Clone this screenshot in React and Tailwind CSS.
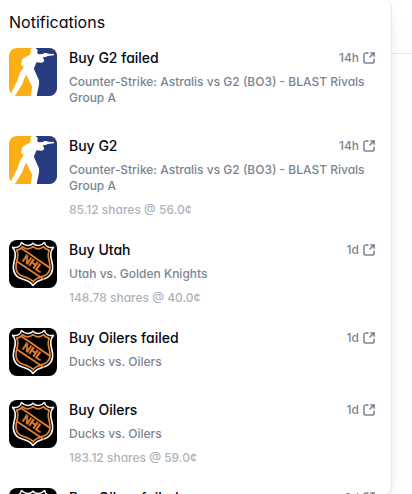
import React from 'react'

const notifications = [
  { id: 1, title: 'Buy G2 failed', market: 'Counter-Strike: Astralis vs G2 (BO3) - BLAST Rivals Group A', time: '14h', logo: CounterStrikeLogo },
  { id: 2, title: 'Buy G2', market: 'Counter-Strike: Astralis vs G2 (BO3) - BLAST Rivals Group A', shares: '85.12 shares @ 56.0¢', time: '14h', logo: CounterStrikeLogo },
  { id: 3, title: 'Buy Utah', market: 'Utah vs. Golden Knights', shares: '148.78 shares @ 40.0¢', time: '1d', logo: HockeyLogo },
  { id: 4, title: 'Buy Oilers failed', market: 'Ducks vs. Oilers', time: '1d', logo: HockeyLogo },
  { id: 5, title: 'Buy Oilers', market: 'Ducks vs. Oilers', shares: '183.12 shares @ 59.0¢', time: '1d', logo: HockeyLogo },
  { id: 6, title: 'Buy Oilers failed', market: 'Ducks vs. Oilers', time: '2d', logo: HockeyLogo },
]

export default function App() {
  return (
    <div className="flex h-screen overflow-hidden bg-white font-['Inter',sans-serif] [font-feature-settings:'cv11']">
      <main className="relative z-10 min-w-0 flex-1 overflow-hidden rounded-r-lg border-r border-gray-200 bg-white pl-[9px] pr-4 shadow-lg">
        <h1 className="pb-3.5 pt-2.5 text-base leading-6 text-gray-950">Notifications</h1>
        <ul className="flex flex-col gap-[22px]">
          {notifications.map((item) => (
            <NotificationRow key={item.id} {...item} />
          ))}
        </ul>
      </main>
      {/* Page behind the panel */}
      <div className="w-5">
        <div className="h-[54px] border-b border-gray-200" />
      </div>
    </div>
  )
}

function NotificationRow({ title, market, shares, time, logo: Logo }) {
  return (
    <li>
      <a href="#" className="flex items-start gap-3">
        <Logo />
        <div className="flex min-w-0 flex-1 flex-col gap-2 pt-0.5 text-xs font-medium leading-4">
          <div className="flex items-center justify-between">
            <h2 className="text-sm font-medium leading-4 text-gray-950">{title}</h2>
            <div className="flex items-center gap-1 text-[#7b8493]">
              <span>{time}</span>
              <OpenIcon />
            </div>
          </div>
          <p className="text-[#7b8493]">{market}</p>
          <p className="text-[#aeb4bc]">{shares}</p>
        </div>
      </a>
    </li>
  )
}

function OpenIcon() {
  return (
    <svg className="size-3 shrink-0" viewBox="0 0 12 12" fill="none" stroke="currentColor" strokeWidth="1.5" strokeLinecap="round" strokeLinejoin="round" aria-hidden="true">
      <path d="M5 .9H3A2.1 2.1 0 0 0 .9 3v6A2.1 2.1 0 0 0 3 11.1h6A2.1 2.1 0 0 0 11.1 9V7.2" />
      <path d="M7.8.9h3.3v3.3M11.1.9 7 5" />
    </svg>
  )
}

function CounterStrikeLogo() {
  return (
    <svg className="size-12 shrink-0 rounded-lg" viewBox="0 0 48 48" aria-hidden="true">
      <path fill="#fcae17" d="M0 0h48v48H0z" />
      <path fill="#263b80" d="M26 0h22v48H25l1-14-6-13z" />
      <path
        fill="#fff"
        d="M21.5 1 23.5 0h3.2l2 2-.5 3 1.3 1.3 4.7-.2.8-1.1h3l.5.8 6.5.1v1.4l-6.5.6-.8.9-3.4.5-.3 1.2 1 .6-.2 2.8-2.6.9-4.7-.5-2.7 6.4 1 2 4.2 9.8.1 3.5-2.6 12.9H21.8l1.4-10.5L17 26.5 12.8 37 5.8 48H1.5l.3-2.6L8.2 33l2.8-8.2 3-4.5.8-1.2-2.8-2.7 1.3-5.4 3.3-2.1 4.8-2.3.3-1.8z"
      />
    </svg>
  )
}

function HockeyLogo() {
  return (
    <svg className="size-12 shrink-0 rounded-lg" viewBox="0 0 48 48" fill="none" aria-hidden="true">
      <path fill="#000" d="M0 0h48v48H0z" />
      <path
        stroke="#f4f4f4"
        strokeWidth="1.6"
        strokeLinejoin="round"
        d="M24 3.2C21 6.5 16 6.2 12.5 2.5 12 6 8 8.4 3.6 7.4 7 11.5 7 15 5.5 20 3.5 27 4.2 34 9.5 37.4 13 39.8 20.2 39.6 24 45.5c3.8-5.9 11-5.7 14.5-8.1C43.8 34 44.5 27 42.5 20 41 15 41 11.5 44.4 7.4 40 8.4 36 6 35.5 2.5 32 6.2 27 6.5 24 3.2z"
      />
      <path
        stroke="#e5822f"
        strokeWidth="1.7"
        strokeLinejoin="round"
        d="M24 6.7c-3.3 2.7-7.5 2.6-10.6 0-1.2 2.1-3.3 3.3-5.7 3.5 1.6 3.5 1.3 6.8.2 10.4-1.7 6-1.3 11.5 3 14.3 3.4 2.2 9 2.3 13.1 6.7 4.1-4.4 9.7-4.5 13.1-6.7 4.3-2.8 4.7-8.3 3-14.3-1.1-3.6-1.4-6.9.2-10.4-2.4-.2-4.5-1.4-5.7-3.5-3.1 2.6-7.3 2.7-10.6 0z"
      />
      <path stroke="#e5822f" strokeWidth="1.7" d="m12 8 29 20M8 21.5l27 18" />
      <text x="24" y="27.4" textAnchor="middle" transform="rotate(34 24 23.5)" fill="#e5822f" stroke="#e5822f" strokeWidth="0.4" className="font-['Liberation_Sans',sans-serif] text-[11px] font-bold">
        NHL
      </text>
    </svg>
  )
}
